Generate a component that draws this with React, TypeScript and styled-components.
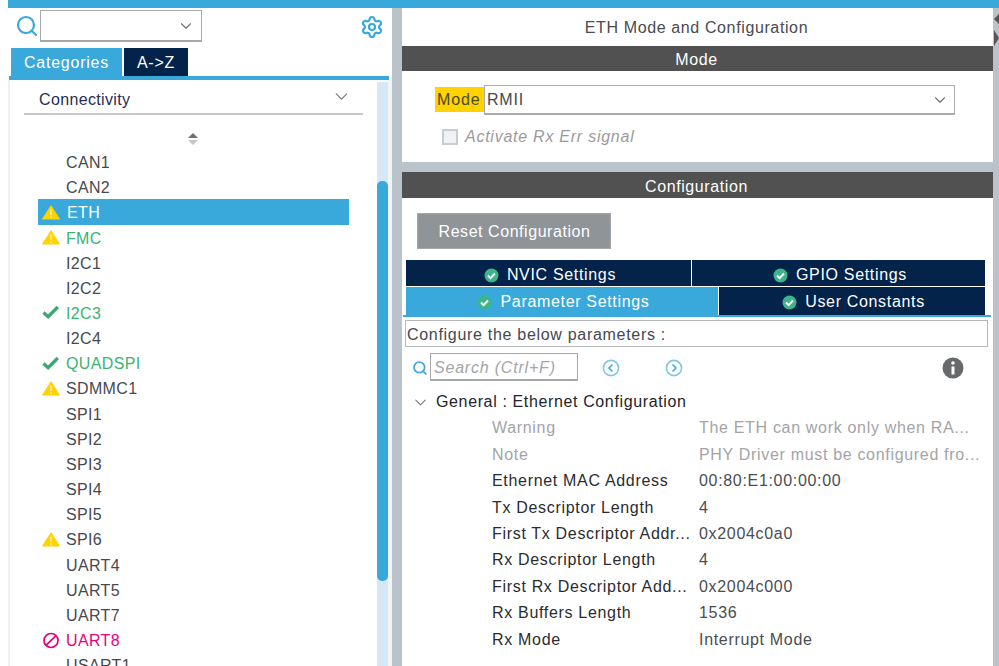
import React from 'react';
import styled, { createGlobalStyle } from 'styled-components';
import { Search, Settings, ChevronDown } from 'lucide-react';

const Global = createGlobalStyle`
  html, body { margin: 0; padding: 0; background: #fff; }
  #root { width: 999px; height: 666px; overflow: hidden; }
  * { box-sizing: border-box; }
`;

const BLUE = '#39a9dc';
const NAVY = '#03234b';
const GRAY = '#b9c3c9';
const DARK = '#505150';

const Page = styled.div`
  width: 999px; height: 666px; overflow: hidden; padding-left: 8px;
  display: flex; flex-direction: column; background: #fff;
  font-family: "Liberation Sans", Arial, sans-serif; font-size: 16px; letter-spacing: .35px; color: #46494f;
`;
const TopBar = styled.div`height: 8px; flex: none; background: ${BLUE};`;
const Main = styled.div`flex: 1; min-height: 0; display: flex;`;
const LeftPanel = styled.div`width: 384px; flex: none; display: flex; flex-direction: column; min-height: 0;`;
const Toolbar = styled.div`height: 40px; flex: none; display: flex; align-items: flex-start; padding: 2px 8px 0 7px;`;
const SearchIcon = styled.span`display: flex; color: ${BLUE}; margin: 4px 1px 0 0;`;
const Combo = styled.div`
  width: 162px; height: 32px; border: 1px solid #a4a9ad; border-bottom-width: 2px; display: flex; align-items: center; justify-content: flex-end;
  padding-right: 6px; color: #6d7074; background: #fff;
`;
const Gear = styled.span`display: flex; color: ${BLUE}; margin: 5px 0 0 auto;`;
const TabsRow = styled.div`height: 28px; flex: none; display: flex; gap: 2px; padding-left: 3px;`;
const TopTab = styled.div<{ $active?: boolean }>`
  width: ${p => (p.$active ? 111 : 64)}px; display: flex; align-items: center; justify-content: center;
  padding-top: 1px; color: #fff; letter-spacing: .75px; background: ${p => (p.$active ? BLUE : NAVY)};
`;
const TabLine = styled.div`height: 4px; flex: none; margin: 0 3px 0 1px; background: ${BLUE};`;
const ListArea = styled.div`flex: 1; min-height: 0; display: flex; border-left: 2px solid #eef0f2; border-right: 4px solid #f1f3f5;`;
const ListBody = styled.div`flex: 1; min-width: 0; display: flex; flex-direction: column; padding: 0 0 0 14px;`;
const CategoryHead = styled.div`
  height: 34px; margin-top: 1px; width: 339px; display: flex; align-items: center; justify-content: space-between; padding: 6px 11px 0 15px;
  color: #1f2f55; border-bottom: 2px solid #c3c7cb; flex: none;
`;
const SortMark = styled.div`height: 14px; margin: 17px 0 0; flex: none; width: 337px; display: flex; justify-content: center;`;
const List = styled.div`display: flex; flex-direction: column; margin-top: 3.5px;`;
const Item = styled.div<{ $color?: string; $selected?: boolean }>`
  height: 25.16px; flex: none; width: 311px; margin-left: 14px; padding: 2px 0 0 ${p => (p.$selected ? 29 : 28)}px; position: relative;
  display: flex; align-items: center; white-space: nowrap;
  color: ${p => (p.$selected ? '#fff' : p.$color || '#46494f')};
  background: ${p => (p.$selected ? BLUE : 'transparent')};
  box-shadow: ${p => (p.$selected ? `0 -1px 0 ${BLUE}` : 'none')};
`;
const ItemIcon = styled.span`position: absolute; left: 4px; top: 5px; display: flex;`;
const Track = styled.div`width: 11px; flex: none; background: #d6e7f6; margin-top: 2px; display: flex; flex-direction: column;`;
const Thumb = styled.div`width: 100%; height: 400px; margin-top: 99px; background: ${BLUE}; border-radius: 5px; flex: none;`;
const Splitter = styled.div`width: 10px; flex: none; background: ${GRAY};`;

const RightPanel = styled.div`width: 591px; flex: none; display: flex; flex-direction: column; min-height: 0; background: ${GRAY};`;
const ModeCard = styled.section`height: 154px; flex: none; background: #fff; display: flex; flex-direction: column;`;
const Title = styled.div`height: 38px; flex: none; display: flex; align-items: center; justify-content: center; padding: 1px 2px 0 0; color: #484b4f; letter-spacing: .62px;`;
const SectionHead = styled.div<{ $tall?: boolean }>`
  height: ${p => (p.$tall ? 26 : 25)}px; flex: none; background: ${DARK}; color: #fff; display: flex; align-items: center; justify-content: center;
  padding: ${p => (p.$tall ? 3 : 2)}px 2px 0 0; letter-spacing: .6px;
`;
const ModeRow = styled.div`display: flex; align-items: flex-start; padding: 14px 0 0 33px; height: 43px; flex: none;`;
const ModeLabel = styled.div`
  width: 49px; height: 25px; margin-top: 2px; background: #ffd200; display: flex; align-items: center; padding: 1px 0 0 2px; color: #4b4a2c; flex: none; letter-spacing: .85px;
`;
const ModeSelect = styled.div`
  width: 471px; height: 30px; border: 1px solid #a9adb1; border-bottom-width: 2px; display: flex; align-items: center; justify-content: space-between;
  padding: 1px 5px 0 2px; color: #46494f; background: #fff; letter-spacing: .8px;
`;
const CheckRow = styled.div`display: flex; align-items: center; gap: 7px; margin: 14px 0 0 40px; color: #9a9a9c; font-style: italic; letter-spacing: .75px;`;
const CheckBox = styled.span`width: 16px; height: 16px; border: 2px solid #c9ccce; background: #f0f1f3; flex: none;`;
const ConfigCard = styled.section`flex: 1; min-height: 0; margin-top: 10px; background: #fff; display: flex; flex-direction: column;`;
const ResetButton = styled.div`
  width: 194px; height: 36px; margin: 15px 0 0 15px; padding: 2px 0 0 1px; background: #8f9498; color: #fff; display: flex; align-items: center; justify-content: center; flex: none;
  border: 1px solid #a4a8ab; letter-spacing: .55px;
`;
const SubTabs = styled.div`margin: 11px 0 0 4px; width: 579px; display: flex; flex-direction: column; gap: 1px; flex: none;`;
const SubRow = styled.div<{ $high: number; $drop: number }>`height: ${p => p.$high}px; display: flex; gap: 1px; --drop: ${p => p.$drop}px;`;
const SubTab = styled.div<{ $w: number; $active?: boolean }>`
  width: ${p => p.$w}px; display: flex; align-items: center; justify-content: center; gap: 8px; color: #fff;
  padding: var(--drop) 0 0 3px; letter-spacing: .67px;
  background: ${p => (p.$active ? BLUE : NAVY)};
`;
const SubLine = styled.div`height: 2px; margin: 0 2px 0 1px; background: ${BLUE}; flex: none;`;
const ConfigureBox = styled.div`
  height: 27px; flex: none; margin: 3px 5px 0 3px; border: 1px solid #b4b8bb; display: flex; align-items: center; padding: 3px 1px 0; color: #46494f; letter-spacing: .7px;
`;
const SearchRow = styled.div`height: 28px; flex: none; margin-top: 6px; padding-left: 10px; display: flex; align-items: center;`;
const SearchGlass = styled.span`display: flex; margin-top: 2px;`;
const SearchField = styled.div`
  width: 148px; height: 28px; margin-left: 2px; border: 1px solid #a4a8ab; border-bottom-width: 2px; display: flex; align-items: center; padding: 3px 0 0 3px;
  color: #a3a5a8; font-style: italic; letter-spacing: .8px; white-space: nowrap;
`;
const RoundButton = styled.span<{ $gap: number }>`display: flex; margin: 2px 0 0 ${p => p.$gap}px;`;
const InfoMark = styled.span`display: flex; margin: 2px 0 0 259px;`;
const GeneralRow = styled.div`display: flex; align-items: center; height: 26px; margin-top: 8px; padding-left: 8.5px; gap: 6.5px; color: #22252a; flex: none; letter-spacing: .63px;`;
const Params = styled.div`display: flex; flex-direction: column; flex: none;`;
const ParamRow = styled.div<{ $off?: boolean }>`
  height: 26.45px; flex: none; display: grid; grid-template-columns: 207px 1fr; padding-left: 90px; align-items: center; white-space: nowrap;
  letter-spacing: .68px; color: ${p => (p.$off ? '#a3a4a6' : '#2a2c30')};
`;
const ParamValue = styled.span<{ $off?: boolean }>`color: ${p => (p.$off ? '#a3a4a6' : '#4a4d52')};`;
const Gutter = styled.div`width: 6px; flex: none; background: ${GRAY}; display: flex; flex-direction: column; align-items: flex-start; padding: 6px 0 0 1px; gap: 6px;`;

const Warn = () => (
  <svg width="18" height="15" viewBox="0 0 18 15">
    <path d="M9 1 17.3 14H.7Z" fill="#ffd200" stroke="#ffd200" strokeLinejoin="round" strokeWidth="1.2" />
    <path d="M9 4.5v5.5M9 11.2v1.8" stroke="#fff2b0" strokeWidth="1.6" />
  </svg>
);
const Tick = () => (
  <svg width="18" height="15" viewBox="0 0 18 15">
    <path d="M1.5 7.5l4.6 4.2L15.8 2" fill="none" stroke="#3ba675" strokeWidth="3.2" />
  </svg>
);
const Ban = () => (
  <svg width="18" height="17" viewBox="0 0 18 17">
    <circle cx="9" cy="8.5" r="7" fill="none" stroke="#e6007e" strokeWidth="1.7" />
    <path d="M4.2 13.2 13.8 3.8" stroke="#e6007e" strokeWidth="1.7" />
  </svg>
);
const Badge = () => (
  <svg width="15" height="15" viewBox="0 0 15 15">
    <circle cx="7.5" cy="7.5" r="7" fill="#3fb489" />
    <path d="M4 7.5l2.6 2.6L11 5.5" fill="none" stroke="#fff" strokeWidth="2" />
  </svg>
);
const Round = ({ dir }: { dir: 'l' | 'r' }) => (
  <svg width="18" height="18" viewBox="0 0 18 18">
    <circle cx="9" cy="9" r="7.6" fill="none" stroke="#7fc6e8" strokeWidth="1.6" />
    <path d={dir === 'l' ? 'M10.5 5.5 7 9l3.5 3.5' : 'M7.5 5.5 11 9l-3.5 3.5'} fill="none" stroke={BLUE} strokeWidth="1.5" />
  </svg>
);
const Info = () => (
  <svg width="22" height="22" viewBox="0 0 22 22">
    <circle cx="11" cy="11" r="10.5" fill="#67696b" />
    <circle cx="11" cy="6" r="1.8" fill="#fff" />
    <path d="M11 9.5v8" stroke="#fff" strokeWidth="3" />
  </svg>
);

type Row = { name: string; icon?: 'w' | 't' | 'b'; color?: string; selected?: boolean };
const GREEN = '#3cb371';
const rows: Row[] = [
  { name: 'CAN1' }, { name: 'CAN2' },
  { name: 'ETH', icon: 'w', selected: true },
  { name: 'FMC', icon: 'w', color: GREEN },
  { name: 'I2C1' }, { name: 'I2C2' },
  { name: 'I2C3', icon: 't', color: GREEN },
  { name: 'I2C4' },
  { name: 'QUADSPI', icon: 't', color: GREEN },
  { name: 'SDMMC1', icon: 'w' },
  { name: 'SPI1' }, { name: 'SPI2' }, { name: 'SPI3' }, { name: 'SPI4' }, { name: 'SPI5' },
  { name: 'SPI6', icon: 'w' },
  { name: 'UART4' }, { name: 'UART5' }, { name: 'UART7' },
  { name: 'UART8', icon: 'b', color: '#e6007e' },
  { name: 'USART1' },
];
const params: [string, string, boolean?][] = [
  ['Warning', 'The ETH can work only when RA...', true],
  ['Note', 'PHY Driver must be configured fro...', true],
  ['Ethernet MAC Address', '00:80:E1:00:00:00'],
  ['Tx Descriptor Length', '4'],
  ['First Tx Descriptor Addr...', '0x2004c0a0'],
  ['Rx Descriptor Length', '4'],
  ['First Rx Descriptor Add...', '0x2004c000'],
  ['Rx Buffers Length', '1536'],
  ['Rx Mode', 'Interrupt Mode'],
];

export default function App() {
  return (
    <Page>
      <Global />
      <TopBar />
      <Main>
        <LeftPanel>
          <Toolbar>
            <SearchIcon><Search size={24} strokeWidth={2.2} /></SearchIcon>
            <Combo><ChevronDown size={18} strokeWidth={1.5} /></Combo>
            <Gear><Settings size={24} strokeWidth={2.2} /></Gear>
          </Toolbar>
          <TabsRow>
            <TopTab $active>Categories</TopTab>
            <TopTab>A-&gt;Z</TopTab>
          </TabsRow>
          <TabLine />
          <ListArea>
            <ListBody>
              <CategoryHead>
                Connectivity
                <ChevronDown size={21} strokeWidth={1.3} color="#70757a" style={{ marginTop: -8 }} />
              </CategoryHead>
              <SortMark>
                <svg width="14" height="14" viewBox="0 0 14 14">
                  <path d="M7 1l5 5H2Z" fill="#6e7174" />
                  <path d="M7 13l5-5H2Z" fill="#c4c6c8" />
                </svg>
              </SortMark>
              <List>
                {rows.map(r => (
                  <Item key={r.name} $color={r.color} $selected={r.selected}>
                    {r.icon && (
                      <ItemIcon>
                        {r.icon === 'w' ? <Warn /> : r.icon === 't' ? <Tick /> : <Ban />}
                      </ItemIcon>
                    )}
                    {r.name}
                  </Item>
                ))}
              </List>
            </ListBody>
            <Track><Thumb /></Track>
          </ListArea>
        </LeftPanel>
        <Splitter />
        <RightPanel>
          <ModeCard>
            <Title>ETH Mode and Configuration</Title>
            <SectionHead>Mode</SectionHead>
            <ModeRow>
              <ModeLabel>Mode</ModeLabel>
              <ModeSelect>RMII<ChevronDown size={18} strokeWidth={1.5} color="#6d7074" /></ModeSelect>
            </ModeRow>
            <CheckRow><CheckBox />Activate Rx Err signal</CheckRow>
          </ModeCard>
          <ConfigCard>
            <SectionHead $tall>Configuration</SectionHead>
            <ResetButton>Reset Configuration</ResetButton>
            <SubTabs>
              <SubRow $high={26} $drop={4}>
                <SubTab $w={285}><Badge />NVIC Settings</SubTab>
                <SubTab $w={293}><Badge />GPIO Settings</SubTab>
              </SubRow>
              <SubRow $high={28} $drop={2}>
                <SubTab $w={312} $active><Badge />Parameter Settings</SubTab>
                <SubTab $w={266}><Badge />User Constants</SubTab>
              </SubRow>
            </SubTabs>
            <SubLine />
            <ConfigureBox>Configure the below parameters :</ConfigureBox>
            <SearchRow>
              <SearchGlass><Search size={16} strokeWidth={2.6} color={BLUE} /></SearchGlass>
              <SearchField>Search (Ctrl+F)</SearchField>
              <RoundButton $gap={24}><Round dir="l" /></RoundButton>
              <RoundButton $gap={45}><Round dir="r" /></RoundButton>
              <InfoMark><Info /></InfoMark>
            </SearchRow>
            <GeneralRow>
              <ChevronDown size={19} strokeWidth={1.3} color="#70757a" />
              General : Ethernet Configuration
            </GeneralRow>
            <Params>
              {params.map(([k, v, off]) => (
                <ParamRow key={k} $off={off}>
                  <span>{k}</span>
                  <ParamValue $off={off}>{v}</ParamValue>
                </ParamRow>
              ))}
            </Params>
          </ConfigCard>
        </RightPanel>
        <Gutter>
          <svg width="5" height="10" viewBox="0 0 5 10"><path d="M5 0v10L0 5Z" fill="#555" /></svg>
          <svg width="5" height="16" viewBox="0 0 5 16"><path d="M0 0v16l5-8Z" fill="#555" /></svg>
        </Gutter>
      </Main>
    </Page>
  );
}
